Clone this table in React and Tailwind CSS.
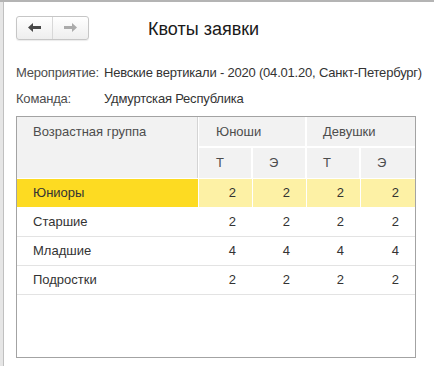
import React from 'react';

const rows = [
  { name: 'Юниоры', values: [2, 2, 2, 2], current: true },
  { name: 'Старшие', values: [2, 2, 2, 2] },
  { name: 'Младшие', values: [4, 4, 4, 4] },
  { name: 'Подростки', values: [2, 2, 2, 2] },
];

const Arrow = ({ dir, color }) => (
  <svg width="13" height="9" viewBox="0 0 13 9" className={dir === 'right' ? 'rotate-180' : ''}>
    <path d="M0 4.5 L5 0 V3 H13 V6 H5 V9 Z" fill={color} />
  </svg>
);

const cols = 'grid grid-cols-[181px_54px_54px_54px_55px]';

const App = () => {
  return (
    <div
      className="w-[434px] h-[366px] bg-white flex flex-col overflow-hidden"
      style={{ fontFamily: '"Liberation Sans", Arial, sans-serif' }}
    >
      <div className="h-[2px] bg-[#b4b4b4]" />
      <div className="flex flex-1">
        <div className="w-[4px] bg-[#e6e6e6] border-r border-[#c0c0c0]" />
        <div className="flex-1 pl-[12px] pt-[13px]">
          {/* Toolbar */}
          <div className="flex items-center">
            <div className="flex h-[24px] w-[73px] rounded-[3px] border border-[#c6c6c6] bg-gradient-to-b from-white to-[#eeeeee] shadow-[0_1px_1px_rgba(0,0,0,0.08)]">
              <div className="w-[36px] flex items-center justify-center border-r border-[#d8d8d8]">
                <Arrow dir="left" color="#484848" />
              </div>
              <div className="flex-1 flex items-center justify-center">
                <Arrow dir="right" color="#ababab" />
              </div>
            </div>
            <div className="ml-[59px] text-[18px] leading-[22px] text-[#1a1a1a] mt-[3px]">Квоты заявки</div>
          </div>

          {/* Fields */}
          <div className="mt-[25px] text-[13px] leading-[16px] tracking-[-0.2px]">
            <div className="flex">
              <span className="w-[88px] text-[#4d4d4d]">Мероприятие:</span>
              <span className="text-[#333]">Невские вертикали - 2020 (04.01.20, Санкт-Петербург)</span>
            </div>
            <div className="flex mt-[10px]">
              <span className="w-[88px] text-[#4d4d4d]">Команда:</span>
              <span className="text-[#333]">Удмуртская Республика</span>
            </div>
          </div>

          {/* Table */}
          <div className="mt-[9px] w-[400px] h-[242px] border border-[#a3a3a3] text-[13px] leading-[16px]">
            <div className={`${cols} grid-rows-[30px_31px] bg-[#f2f2f2] text-[#4d4d4d] border-b border-white`}>
              <div className="row-span-2 pl-[16px] pt-[7px] border-r border-[#d4d4d4]">Возрастная группа</div>
              <div className="col-span-2 pl-[17px] flex items-center border-l border-white border-r border-[#d4d4d4] border-b">Юноши</div>
              <div className="col-span-2 pl-[16px] flex items-center border-l border-white border-b border-[#d4d4d4]">Девушки</div>
              <div className="pl-[17px] flex items-center border-l border-white border-t border-r border-[#d4d4d4]">Т</div>
              <div className="pl-[16px] flex items-center border-l border-white border-t border-r border-[#d4d4d4]">Э</div>
              <div className="pl-[16px] flex items-center border-l border-white border-t border-r border-[#d4d4d4]">Т</div>
              <div className="pl-[16px] flex items-center border-l border-white border-t border-t-white">Э</div>
            </div>
            {rows.map((row) => (
              <div
                key={row.name}
                className={`${cols} h-[29px] border-b text-[#333] ${row.current ? 'border-white' : 'border-[#e3e3e3]'}`}
              >
                <div className={`pl-[16px] flex items-center ${row.current ? 'bg-[#fddb22]' : ''}`}>{row.name}</div>
                {row.values.map((v, i) => (
                  <div
                    key={i}
                    className={`flex items-center justify-end pr-[16px] ${row.current ? 'bg-[#fdf1a5] border-l border-white' : ''}`}
                  >
                    {v}
                  </div>
                ))}
              </div>
            ))}
          </div>
        </div>
      </div>
    </div>
  );
};

export default App;
